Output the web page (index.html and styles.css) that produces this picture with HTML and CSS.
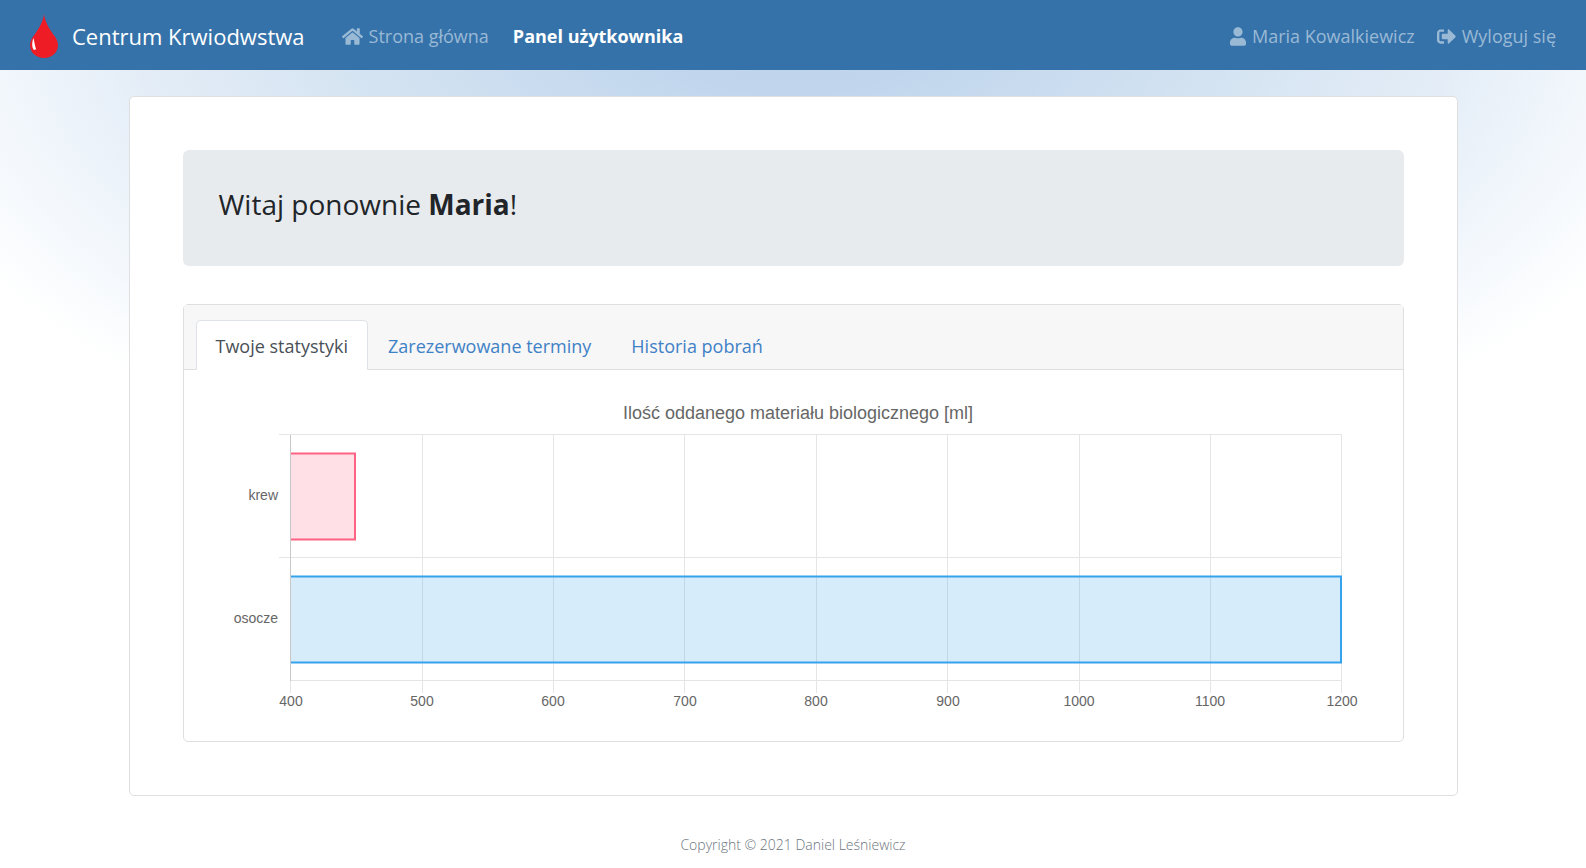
FILE: index.html
```html
<!DOCTYPE html>
<html lang="pl">
<head>
<meta charset="utf-8">
<meta name="viewport" content="width=device-width, initial-scale=1">
<title>Centrum Krwiodwstwa</title>
<link rel="stylesheet" href="styles.css">
</head>
<body>
<header class="navbar">
  <a class="brand" href="#">
    <svg class="brand-logo" viewBox="0 0 28 44" aria-hidden="true">
      <path d="M14 0C15 8 19 14 23 20C26 24 28 27 28 31C28 38.500 22 44 14 44S0 38.500 0 31C0 27 2 24 5 20C9 14 13 8 14 0Z" fill="#ee1c24"/>
      <path d="M3.500 24C1.500 29 2 34 4 36L6.200 35.200C4.800 32 4.500 28 3.500 24Z" fill="#fff"/>
    </svg>
    <span>Centrum Krwiodwstwa</span>
  </a>
  <nav class="nav">
    <a class="nav-link" href="#">
      <svg class="icon icon-home" viewBox="0 0 576 512" aria-hidden="true"><path d="M280.370 148.260L96 300.110V464a16 16 0 0 0 16 16l112.060-.29a16 16 0 0 0 15.920-16V368a16 16 0 0 1 16-16h64a16 16 0 0 1 16 16v95.640a16 16 0 0 0 16 16.050L464 480a16 16 0 0 0 16-16V300L295.670 148.260a12.190 12.190 0 0 0-15.300 0zM571.600 251.470L488 182.560V44.050a12 12 0 0 0-12-12h-56a12 12 0 0 0-12 12v72.610L318.470 43a48 48 0 0 0-61 0L4.340 251.470a12 12 0 0 0-1.600 16.900l25.500 31A12 12 0 0 0 45.150 301l235.220-193.740a12.190 12.190 0 0 1 15.300 0L530.900 301a12 12 0 0 0 16.900-1.600l25.500-31a12 12 0 0 0-1.700-16.930z"/></svg>
      <span>Strona główna</span>
    </a>
    <a class="nav-link active" href="#" aria-current="page">Panel użytkownika</a>
  </nav>
  <nav class="nav nav-user">
    <a class="nav-link" href="#">
      <svg class="icon icon-user" viewBox="0 0 448 512" aria-hidden="true"><path d="M224 256c70.700 0 128-57.300 128-128S294.700 0 224 0 96 57.300 96 128s57.300 128 128 128zm89.600 32h-16.700c-22.200 10.200-46.900 16-72.900 16s-50.600-5.800-72.900-16h-16.700C60.200 288 0 348.200 0 422.400V464c0 26.500 21.500 48 48 48h352c26.500 0 48-21.500 48-48v-41.600c0-74.200-60.200-134.400-134.400-134.400z"/></svg>
      <span>Maria Kowalkiewicz</span>
    </a>
    <a class="nav-link" href="#">
      <svg class="icon icon-logout" viewBox="0 0 512 512" aria-hidden="true"><path d="M497 273L329 441c-15 15-41 4.500-41-17v-96H152c-13.300 0-24-10.700-24-24v-96c0-13.300 10.700-24 24-24h136V88c0-21.400 25.900-32 41-17l168 168c9.300 9.400 9.300 24.600 0 34zM192 436v-40c0-6.600-5.400-12-12-12H96c-17.700 0-32-14.300-32-32V160c0-17.700 14.300-32 32-32h84c6.600 0 12-5.400 12-12V76c0-6.600-5.400-12-12-12H96c-53 0-96 43-96 96v192c0 53 43 96 96 96h84c6.600 0 12-5.400 12-12z"/></svg>
      <span>Wyloguj się</span>
    </a>
  </nav>
</header>

<main class="panel">
  <section class="welcome">
    <h1>Witaj ponownie <strong>Maria</strong>!</h1>
  </section>

  <section class="card">
    <div class="tabs" role="tablist">
      <button class="tab selected" type="button" role="tab" aria-selected="true">Twoje statystyki</button>
      <button class="tab" type="button" role="tab" aria-selected="false">Zarezerwowane terminy</button>
      <button class="tab" type="button" role="tab" aria-selected="false">Historia pobrań</button>
    </div>
    <div class="card-body">
      <svg class="chart" viewBox="0 0 1171 323" role="img" aria-label="Ilość oddanego materiału biologicznego [ml]">
        <text class="chart-title" x="590" y="25">Ilość oddanego materiału biologicznego [ml]</text>
        <path class="grid-line" d="M71 40.500H1134M71 163.500H1134M83 286.500H1134"/>
        <path class="grid-line" d="M214.500 41V299M345.500 41V299M476.500 41V299M608.500 41V299M739.500 41V299M871.500 41V299M1002.500 41V299M1133.500 41V299M82.500 287V299"/>
        <path class="axis-line" d="M82.500 41V287"/>
        <path class="bar-blood" d="M83 59.500H147V145.500H83"/>
        <path class="bar-plasma" d="M83 182.500H1133V268.500H83"/>
        <g class="label-y">
          <text x="70" y="106">krew</text>
          <text x="70" y="229">osocze</text>
        </g>
        <g class="label-x">
          <text x="83" y="312">400</text>
          <text x="214" y="312">500</text>
          <text x="345" y="312">600</text>
          <text x="477" y="312">700</text>
          <text x="608" y="312">800</text>
          <text x="740" y="312">900</text>
          <text x="871" y="312">1000</text>
          <text x="1002" y="312">1100</text>
          <text x="1134" y="312">1200</text>
        </g>
      </svg>
    </div>
  </section>
</main>

<footer class="footer">Copyright © 2021 Daniel Leśniewicz</footer>
</body>
</html>
```
FILE: styles.css
```css
*,
*::before,
*::after {
  box-sizing: border-box;
}

body {
  margin: 0;
  min-height: 100vh;
  font-family: "Open Sans", "Noto Sans", sans-serif;
  font-size: 18px;
  color: #212529;
  background: #fff radial-gradient(ellipse 60% 520px at 50% 0, #bad2ea 0, #c1d6ed 18%, #d2e2f1 44%, #e4edf7 70%, #f2f7fc 85%, #fff 100%) no-repeat;
}

a {
  color: inherit;
  text-decoration: none;
}

.navbar {
  display: flex;
  align-items: center;
  min-height: 70px;
  padding: 2px 30px 0;
  background: #3572aa;
  color: #fff;
}

.brand {
  display: flex;
  align-items: center;
  gap: 14px;
  margin-right: 37px;
  font-size: 22px;
}

.brand-logo {
  width: 28px;
  height: 44px;
}

.nav {
  display: flex;
  align-items: center;
  gap: 24px;
}

.nav-user {
  gap: 22px;
  margin-left: auto;
}

.nav-link {
  display: flex;
  align-items: center;
  gap: 6px;
  color: #9ab9d5;
}

.nav-link.active {
  color: #fff;
  font-weight: 700;
}

.icon {
  height: 19px;
  fill: currentColor;
}

.icon-home {
  width: 21px;
}

.icon-user {
  width: 16px;
}

.icon-logout {
  width: 19px;
}

.panel {
  max-width: 1329px;
  margin: 26px auto 0;
  padding: 53px;
  border: 1px solid #dfdfdf;
  border-radius: 5px;
  background: #fff;
}

.welcome {
  padding: 36px;
  border-radius: 6px;
  background: #e8ebee;
}

.welcome h1 {
  margin: 0 0 8px;
  font-size: 28px;
  font-weight: 500;
  line-height: 36px;
}

.card {
  margin-top: 38px;
  border: 1px solid #dfdfdf;
  border-radius: 5px;
}

.tabs {
  display: flex;
  padding: 15px 12px 0;
  border-bottom: 1px solid #dfdfdf;
  background: #f7f7f7;
}

.tab {
  margin-bottom: -1px;
  padding: 3px 19px 0;
  border: 1px solid transparent;
  border-radius: 5px 5px 0 0;
  background: none;
  color: #3f81c6;
  font: inherit;
  line-height: 45px;
}

.tab.selected {
  border-color: #dee2e6 #dee2e6 #fff;
  background: #fff;
  color: #495057;
}

.card-body {
  padding: 24px;
}

.chart {
  display: block;
  width: 100%;
  font-family: "Liberation Sans", Arial, sans-serif;
  font-size: 14px;
  fill: #666;
}

.chart-title {
  font-size: 18px;
  text-anchor: middle;
}

.label-y {
  text-anchor: end;
}

.label-x {
  text-anchor: middle;
}

.grid-line {
  fill: none;
  stroke: #e5e5e5;
}

.axis-line {
  stroke: #c8c8c8;
}

.bar-blood,
.bar-plasma {
  stroke-width: 2;
}

.bar-blood {
  fill: rgba(255, 99, 132, 0.2);
  stroke: #ff6384;
}

.bar-plasma {
  fill: rgba(54, 162, 235, 0.2);
  stroke: #36a2eb;
}

.footer {
  padding: 37px 0 10px;
  font-size: 14px;
  font-weight: 300;
  line-height: 24px;
  text-align: center;
  color: #6c757d;
}
```
